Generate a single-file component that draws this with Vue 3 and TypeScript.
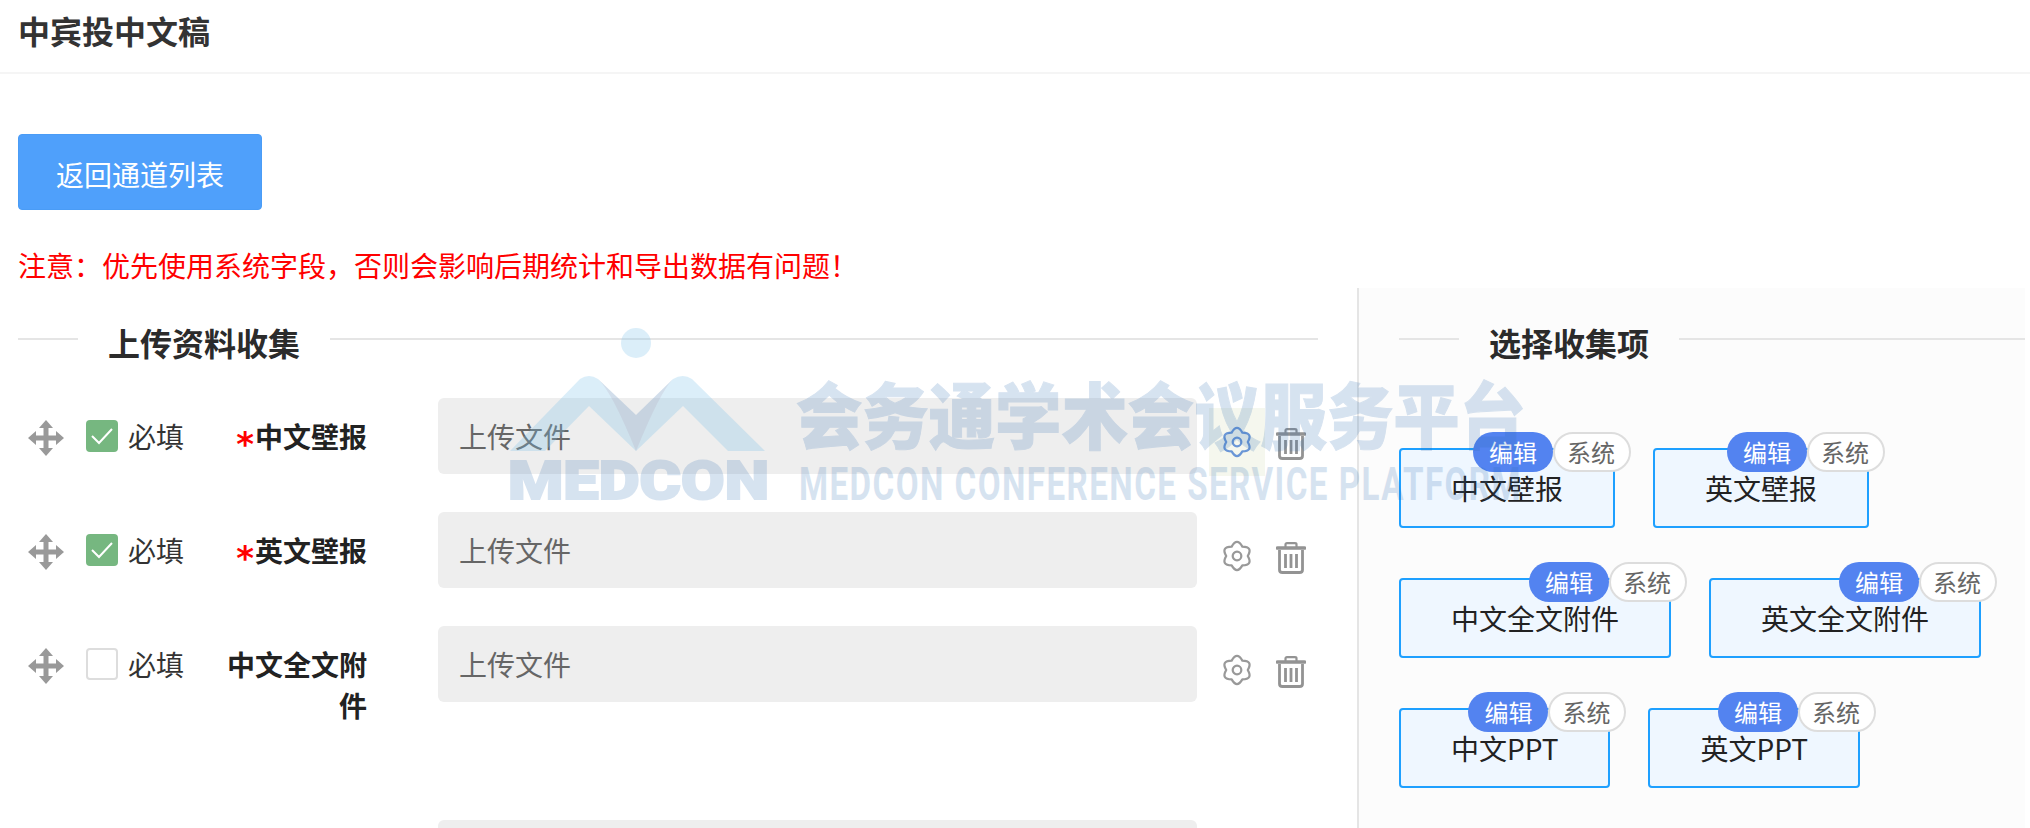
<script setup lang="ts">
interface Field {
  name: string
  checked: boolean
  tall?: boolean
  active?: boolean
}
interface Chip {
  name: string
}

const fields: Field[] = [
  { name: '中文壁报', checked: true, active: true },
  { name: '英文壁报', checked: true },
  { name: '中文全文附件', checked: false, tall: true },
  { name: '英文全文附件', checked: false },
]

const chips: Chip[] = [
  { name: '中文壁报' },
  { name: '英文壁报' },
  { name: '中文全文附件' },
  { name: '英文全文附件' },
  { name: '中文PPT' },
  { name: '英文PPT' },
]
</script>

<template>
  <div class="page">
    <header class="top">
      <h1>中宾投中文稿</h1>
    </header>

    <div class="toolbar">
      <button class="back-btn" type="button">返回通道列表</button>
    </div>
    <p class="notice">注意：优先使用系统字段，否则会影响后期统计和导出数据有问题！</p>

    <div class="columns">
      <section class="left">
        <div class="section-head">
          <span class="line short"></span>
          <h2>上传资料收集</h2>
          <span class="line"></span>
        </div>

        <div
          v-for="field in fields"
          :key="field.name"
          class="row"
          :class="{ tall: field.tall }"
        >
          <svg class="drag" width="36" height="36" viewBox="0 0 36 36">
            <path
              d="M18 0L25 8H20.5V15.5H28V11L36 18L28 25V20.5H20.5V28H25L18 36L11 28H15.5V20.5H8V25L0 18L8 11V15.5H15.5V8H11Z"
              fill="#999"
            />
          </svg>
          <span class="check" :class="{ on: field.checked }">
            <svg v-if="field.checked" width="32" height="32" viewBox="0 0 32 32">
              <path d="M6 16L13 23L26 9" fill="none" stroke="#fff" stroke-width="2" />
            </svg>
          </span>
          <span class="must">必填</span>
          <div class="field-name">
            <span v-if="field.checked" class="star">*</span>{{ field.name }}
          </div>
          <div class="upload">上传文件</div>
          <div class="gear-btn" :class="{ active: field.active }">
            <svg width="30" height="32" viewBox="-1 -1 32 34">
              <path
                d="M26.5 16Q32.3 26 20.7 26Q15 36 9.3 26Q-2.3 26 3.5 16Q-2.3 6 9.3 6Q15 -4 20.7 6Q32.3 6 26.5 16Z"
                fill="none"
                stroke="currentColor"
                stroke-width="2.4"
                stroke-linejoin="round"
              />
              <circle cx="15" cy="16" r="4.6" fill="none" stroke="currentColor" stroke-width="2.4" />
            </svg>
          </div>
          <svg class="trash" width="30" height="32" viewBox="0 0 30 32">
            <path d="M9.5 5V2.5Q9.5 1.2 11 1.2H19Q20.5 1.2 20.5 2.5V5" fill="none" stroke="#939393" stroke-width="2.2" />
            <path d="M1.5 6H28.5" stroke="#939393" stroke-width="3.6" stroke-linecap="round" />
            <path d="M3.5 8V28Q3.5 30.5 6.5 30.5H23.5Q26.5 30.5 26.5 28V8" fill="none" stroke="#939393" stroke-width="2.8" />
            <path d="M9.5 12V26M15 12V26M20.5 12V26" stroke="#939393" stroke-width="2.8" />
          </svg>
        </div>
      </section>

      <section class="right">
        <div class="section-head">
          <span class="line short"></span>
          <h2>选择收集项</h2>
          <span class="line"></span>
        </div>

        <div class="chips">
          <div v-for="chip in chips" :key="chip.name" class="chip">
            {{ chip.name }}
            <div class="badges">
              <span class="badge edit">编辑</span>
              <span class="badge sys">系统</span>
            </div>
          </div>
        </div>
      </section>
    </div>

    <!-- watermark lies over the whole page -->
    <svg class="watermark" width="2030" height="828" viewBox="0 0 2030 828">
      <circle cx="636" cy="343" r="15" fill="rgba(125,195,235,.28)" />
      <path
        d="M510 451L580 379Q589 373 598 379L636 415L673 379Q683 373 692 379L765 451H728L683 406L636 451L589 406L545 451Z"
        fill="rgba(125,195,235,.28)"
      />
      <path d="M598 379L636 415L673 379Q660 392 636 451Q612 392 598 379Z" fill="rgba(166,140,165,.17)" />
      <text x="508" y="499" class="wm wm-logo" textLength="261" lengthAdjust="spacingAndGlyphs">MEDCON</text>
      <text x="796" y="443" class="wm wm-cn" textLength="730" lengthAdjust="spacingAndGlyphs">会务通学术会议服务平台</text>
      <text x="799" y="500" class="wm wm-en" textLength="723" lengthAdjust="spacingAndGlyphs">MEDCON CONFERENCE SERVICE PLATFORM</text>
    </svg>
  </div>
</template>

<style scoped>
.page {
  position: relative;
  height: 828px;
  overflow: hidden;
  background: #fff;
  color: #333;
  font-family: "Noto Sans CJK SC", "Noto Sans", sans-serif;
  font-size: 28px;
}

.top {
  height: 72px;
  padding: 0 18px;
  border-bottom: 2px solid #f5f5f5;
}

.top h1 {
  margin: 0;
  font-size: 32px;
  line-height: 60px;
  font-weight: 700;
  color: #333;
}

.toolbar {
  padding: 60px 18px 0;
}

.back-btn {
  display: block;
  width: 244px;
  height: 76px;
  padding: 3px 0 0;
  border: 1px solid #4a9cf6;
  border-radius: 4px;
  background: #4fa0fb;
  color: #fff;
  font-family: inherit;
  font-size: 28px;
}

.notice {
  margin: 35px 0 0 18px;
  line-height: 40px;
  color: #f00;
}

.columns {
  display: flex;
  margin-top: 3px;
  height: 540px;
}

.left {
  width: 1357px;
  padding: 31px 39px 0 18px;
  box-sizing: border-box;
}

.right {
  width: 668px;
  padding: 31px 0 0 40px;
  box-sizing: border-box;
  border-left: 2px solid #e5e5e5;
  background: #fcfcfc;
}

.section-head {
  display: flex;
  align-items: center;
  height: 40px;
}

.section-head h2 {
  margin: 0 30px;
  font-size: 32px;
  line-height: 40px;
  font-weight: 700;
  color: #2b2b2b;
  white-space: nowrap;
  position: relative;
  top: 3px;
}

.line {
  flex: 1;
  height: 2px;
  background: #e5e5e5;
}

.line.short {
  flex: none;
  width: 60px;
}

.left .section-head {
  margin-bottom: 39px;
}

.row {
  display: flex;
  align-items: flex-start;
  height: 76px;
  margin-bottom: 38px;
}

.row.tall {
  height: 156px;
}

.drag {
  flex: none;
  margin: 22px 0 0 10px;
}

.check {
  flex: none;
  width: 32px;
  height: 32px;
  margin: 22px 0 0 22px;
  box-sizing: border-box;
  border: 2px solid #ddd;
  border-radius: 4px;
  background: #fff;
}

.check.on {
  border: 0;
  background: #76b780;
}

.check svg {
  display: block;
}

.must {
  flex: none;
  margin: 18px 0 0 10px;
  line-height: 41px;
  color: #333;
}

.field-name {
  flex: none;
  width: 140px;
  margin: 18px 0 0 43px;
  line-height: 41px;
  font-weight: 700;
  color: #222;
  text-align: right;
}

.star {
  color: #f00;
  font-family: "DejaVu Sans", sans-serif;
  font-size: 34px;
  line-height: 0;
  vertical-align: -8px;
  margin-right: 1px;
}

.upload {
  flex: none;
  width: 759px;
  height: 76px;
  margin-left: 71px;
  padding-left: 21px;
  box-sizing: border-box;
  border-radius: 6px;
  background: #eee;
  color: #666;
  line-height: 76px;
}

.gear-btn {
  flex: none;
  display: flex;
  align-items: center;
  justify-content: center;
  width: 56px;
  height: 68px;
  margin: 10px 0 0 12px;
  color: #999;
}

.gear-btn.active {
  background: #f5f7ee;
  color: #6a96d6;
}

.trash {
  flex: none;
  margin: 30px 0 0 11px;
}

.chips {
  display: flex;
  flex-wrap: wrap;
  gap: 50px 38px;
  margin-top: 89px;
}

.chip {
  position: relative;
  height: 80px;
  padding: 0 50px;
  box-sizing: border-box;
  border: 2px solid #1ea0ff;
  border-radius: 4px;
  background: #eff7ff;
  color: #222;
  line-height: 76px;
  white-space: nowrap;
}

.badges {
  position: absolute;
  top: -18px;
  right: -18px;
  display: flex;
}

.badge {
  height: 40px;
  box-sizing: border-box;
  border-radius: 20px;
  font-size: 24px;
  text-align: center;
}

.edit {
  width: 80px;
  background: #5383f0;
  color: #fff;
  line-height: 40px;
}

.sys {
  width: 78px;
  padding-right: 2px;
  border: 2px solid #ddd;
  background: #fff;
  color: #666;
  line-height: 36px;
}

.watermark {
  position: absolute;
  left: 0;
  top: 0;
  pointer-events: none;
}

.wm {
  fill: #2e6eb4;
  stroke: #2e6eb4;
  opacity: 0.19;
}

.wm-logo {
  font-family: Roboto, sans-serif;
  font-size: 53px;
  font-weight: 900;
  stroke-width: 2px;
}

.wm-cn {
  font-family: "Noto Sans CJK SC", sans-serif;
  font-size: 72px;
  font-weight: 900;
  stroke-width: 1px;
}

.wm-en {
  font-family: Roboto, sans-serif;
  font-size: 46px;
  font-weight: 700;
  letter-spacing: 2px;
  stroke-width: 0;
}
</style>

<style>
html,
body {
  margin: 0;
  overflow: hidden;
}
</style>
